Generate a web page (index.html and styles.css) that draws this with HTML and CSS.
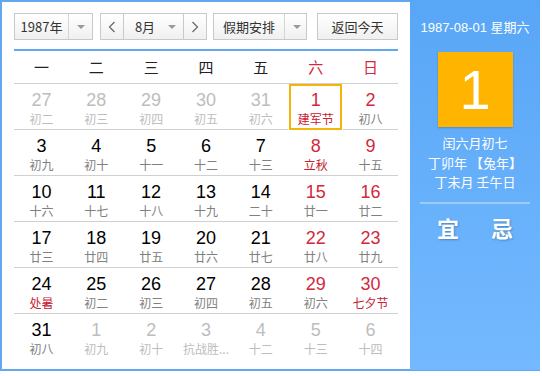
FILE: index.html
```html
<!DOCTYPE html>
<html lang="zh-CN">
<head>
  <meta charset="UTF-8">
  <title>万年历</title>
  <link rel="stylesheet" href="styles.css">
</head>
<body>
  <div class="calendar">
    <div class="main">
      <!-- toolbar -->
      <div class="toolbar">
        <div class="select year"><span class="label">1987年</span><span class="arrow"></span></div>
        <div class="month-group">
          <span class="nav"><svg width="8" height="12" viewBox="0 0 8 12"><polyline points="6.5,1 1.5,6 6.5,11" fill="none" stroke="#666" stroke-width="1.2"/></svg></span>
          <div class="select month"><span class="label">8月</span><span class="arrow"></span></div>
          <span class="nav"><svg width="8" height="12" viewBox="0 0 8 12"><polyline points="1.5,1 6.5,6 1.5,11" fill="none" stroke="#666" stroke-width="1.2"/></svg></span>
        </div>
        <div class="select holiday"><span class="label">假期安排</span><span class="arrow"></span></div>
        <div class="btn">返回今天</div>
      </div>

      <div class="week">
        <span>一</span><span>二</span><span>三</span><span>四</span><span>五</span><span class="red">六</span><span class="red">日</span>
      </div>

      <div class="days">
        <div class="day other"><b>27</b><span>初二</span></div>
        <div class="day other"><b>28</b><span>初三</span></div>
        <div class="day other"><b>29</b><span>初四</span></div>
        <div class="day other"><b>30</b><span>初五</span></div>
        <div class="day other"><b>31</b><span>初六</span></div>
        <div class="day weekend today"><b>1</b><span class="fest">建军节</span></div>
        <div class="day weekend"><b>2</b><span>初八</span></div>

        <div class="day"><b>3</b><span>初九</span></div>
        <div class="day"><b>4</b><span>初十</span></div>
        <div class="day"><b>5</b><span>十一</span></div>
        <div class="day"><b>6</b><span>十二</span></div>
        <div class="day"><b>7</b><span>十三</span></div>
        <div class="day weekend"><b>8</b><span class="fest">立秋</span></div>
        <div class="day weekend"><b>9</b><span>十五</span></div>

        <div class="day"><b>10</b><span>十六</span></div>
        <div class="day"><b>11</b><span>十七</span></div>
        <div class="day"><b>12</b><span>十八</span></div>
        <div class="day"><b>13</b><span>十九</span></div>
        <div class="day"><b>14</b><span>二十</span></div>
        <div class="day weekend"><b>15</b><span>廿一</span></div>
        <div class="day weekend"><b>16</b><span>廿二</span></div>

        <div class="day"><b>17</b><span>廿三</span></div>
        <div class="day"><b>18</b><span>廿四</span></div>
        <div class="day"><b>19</b><span>廿五</span></div>
        <div class="day"><b>20</b><span>廿六</span></div>
        <div class="day"><b>21</b><span>廿七</span></div>
        <div class="day weekend"><b>22</b><span>廿八</span></div>
        <div class="day weekend"><b>23</b><span>廿九</span></div>

        <div class="day"><b>24</b><span class="fest">处暑</span></div>
        <div class="day"><b>25</b><span>初二</span></div>
        <div class="day"><b>26</b><span>初三</span></div>
        <div class="day"><b>27</b><span>初四</span></div>
        <div class="day"><b>28</b><span>初五</span></div>
        <div class="day weekend"><b>29</b><span>初六</span></div>
        <div class="day weekend"><b>30</b><span class="fest">七夕节</span></div>

        <div class="day last"><b>31</b><span>初八</span></div>
        <div class="day other last"><b>1</b><span>初九</span></div>
        <div class="day other last"><b>2</b><span>初十</span></div>
        <div class="day other last"><b>3</b><span>抗战胜...</span></div>
        <div class="day other last"><b>4</b><span>十二</span></div>
        <div class="day other last"><b>5</b><span>十三</span></div>
        <div class="day other last"><b>6</b><span>十四</span></div>
      </div>
    </div>

    <!-- right info panel -->
    <div class="side">
      <div class="side-date">1987-08-01 星期六</div>
      <div class="big-day">1</div>
      <div class="lunar">
        <p>闰六月初七</p>
        <p>丁卯年 【兔年】</p>
        <p>丁未月 壬午日</p>
      </div>
      <div class="yiji">
        <span>宜</span><span>忌</span>
      </div>
    </div>
  </div>
</body>
</html>
```

FILE: styles.css
```css
body {
  margin: 0;
  font-family: "Liberation Sans", "Noto Sans CJK SC", sans-serif;
  background: #fff;
}

.calendar {
  display: flex;
  width: 538px;
  height: 367px;
  border: 2px solid #62a8ee;
  border-right: none;
}

.main {
  width: 384px;
  padding: 11px 12px 0;
}

/* toolbar */
.toolbar {
  display: flex;
  height: 27px;
  font-family: "Noto Sans CJK SC", sans-serif;
  font-size: 13px;
  color: #333;
}

.select,
.btn,
.nav {
  box-sizing: border-box;
  height: 27px;
  border: 1px solid #c9c9c9;
  background: linear-gradient(#fff, #f0f0f0);
  display: flex;
  align-items: center;
}

.select .label {
  flex: 1;
  text-align: center;
  border-right: 1px solid #d5d5d5;
  height: 100%;
  line-height: 25px;
}

.select .arrow {
  width: 23px;
  height: 100%;
  position: relative;
}

.select .arrow::after {
  content: "";
  position: absolute;
  left: 8px;
  top: 11px;
  border: 4px solid transparent;
  border-top: 4px solid #999;
}

.year {
  width: 79px;
}

.month-group {
  display: flex;
  margin-left: 7px;
}

.nav {
  width: 24px;
  justify-content: center;
}

.month {
  width: 59px;
  border-left: none;
  border-right: none;
}

.month .label {
  border-right: none;
  padding-left: 6px;
}

.month .arrow {
  width: 23px;
}

.holiday {
  width: 94px;
  margin-left: 6px;
}

.holiday .label {
  width: 70px;
  flex: none;
}

.btn {
  width: 81px;
  margin-left: 10px;
  justify-content: center;
}

/* week header */
.week {
  display: grid;
  grid-template-columns: repeat(7, 1fr);
  margin-top: 9px;
  height: 32px;
  border-top: 2px solid #62a8ee;
  border-bottom: 1px solid #d0d0d0;
  font-family: "Noto Sans CJK SC", sans-serif;
  font-size: 15px;
  color: #222;
}

.week span {
  text-align: center;
  line-height: 32px;
}

.week .red {
  color: #d3283c;
}

/* days */
.days {
  display: grid;
  grid-template-columns: repeat(7, 1fr);
}

.day {
  box-sizing: border-box;
  height: 46px;
  border-bottom: 1px solid #d0d0d0;
  display: flex;
  flex-direction: column;
  align-items: center;
  padding-top: 6px;
}

.day.last {
  border-bottom: none;
}

.day b {
  font-family: "Liberation Sans", sans-serif;
  font-weight: normal;
  font-size: 18px;
  line-height: 20px;
  color: #000;
}

.day span {
  font-family: "Noto Sans CJK SC", sans-serif;
  font-size: 12px;
  line-height: 16px;
  margin-top: 1px;
  color: #808080;
}

.day.weekend b {
  color: #d3283c;
}

.day span.fest {
  color: #c8202f;
}

.day.other b,
.day.other span {
  color: #bdbdbd;
}

.day.today {
  border: 2px solid #f5b40a;
  padding-top: 4px;
  margin: 0 1px;
}

/* side panel */
.side {
  flex: 1;
  margin-top: -2px;
  margin-bottom: -1px;
  background: linear-gradient(#58a6f6, #74b9ff);
  color: #fff;
  display: flex;
  flex-direction: column;
  align-items: center;
  font-family: "Noto Sans CJK SC", sans-serif;
}

.side-date {
  margin-top: 20px;
  font-size: 13px;
  font-family: "Liberation Sans", "Noto Sans CJK SC", sans-serif;
  line-height: 16px;
}

.big-day {
  margin-top: 16px;
  width: 75px;
  height: 75px;
  background: #ffb500;
  box-shadow: 0 1px 2px rgba(0, 0, 0, 0.2);
  font-family: "Liberation Sans", sans-serif;
  font-size: 56px;
  line-height: 75px;
  text-align: center;
}

.lunar {
  margin-top: 6px;
  text-align: center;
  font-size: 13px;
}

.lunar p {
  margin: 0;
  line-height: 19.5px;
}

.yiji {
  margin-top: 10px;
  width: 110px;
  border-top: 2px solid rgba(255, 255, 255, 0.35);
  display: flex;
  justify-content: center;
  gap: 32px;
  padding-top: 7px;
  font-size: 22px;
  font-weight: bold;
  text-shadow: 1px 1px 2px rgba(0, 0, 0, 0.25);
}
```
